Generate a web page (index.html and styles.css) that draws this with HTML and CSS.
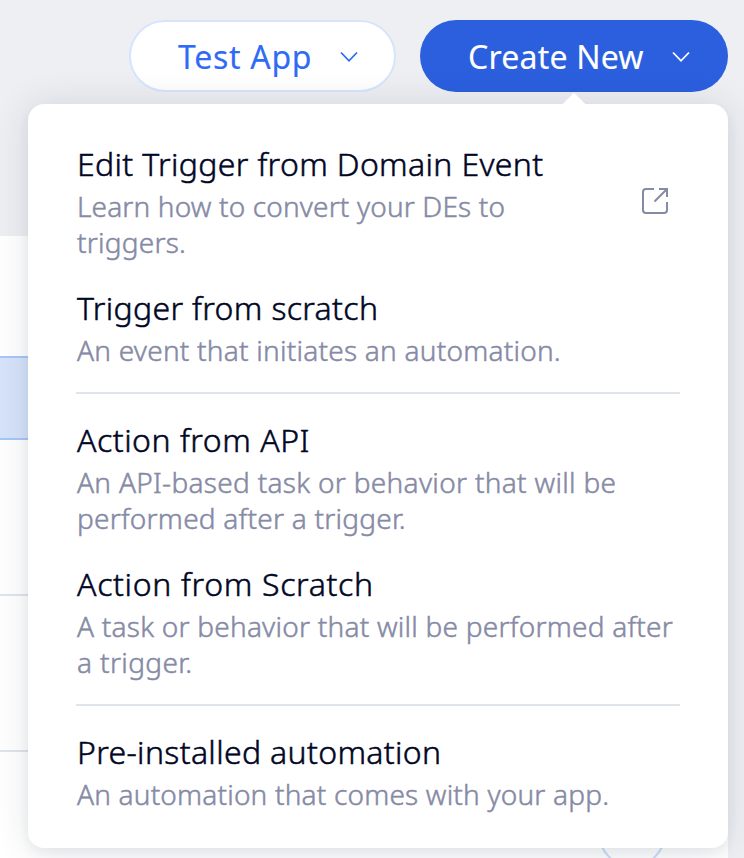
FILE: index.html
```
<!DOCTYPE html>
<html lang="en">
<head>
<meta charset="utf-8">
<title>Automations</title>
<link rel="stylesheet" href="styles.css">
</head>
<body>
<header class="top">
  <button class="btn secondary"><span class="label">Test App</span><svg class="chev" viewBox="0 0 20 12"><path d="M2 1.5 10 9.8 18 1.5"/></svg></button>
  <button class="btn primary"><span class="label">Create New</span><svg class="chev" viewBox="0 0 20 12"><path d="M2 1.5 10 9.8 18 1.5"/></svg></button>
</header>
<main class="table">
  <div class="row head"></div>
  <div class="row selected"></div>
  <div class="row"></div>
  <div class="row"></div>
  <div class="row last"><span class="ring"></span></div>
</main>
<div class="menu">
  <i class="arrow"></i>
  <div class="group">
    <div class="item">
      <div class="text"><h3 class="t-edit">Edit Trigger from Domain Event</h3><p class="t-learn">Learn how to convert your DEs to</p><p>triggers.</p></div>
      <svg class="ext" viewBox="0 0 28 28"><path d="M13 2H5Q2 2 2 5V23Q2 26 5 26H23Q26 26 26 23V15M18 2H26V10M26 2 13.5 14.5"/></svg>
    </div>
    <div class="item">
      <div class="text"><h3>Trigger from scratch</h3><p>An event that initiates an automation.</p></div>
    </div>
  </div>
  <div class="group">
    <div class="item">
      <div class="text"><h3 class="t-api">Action from API</h3><p class="t-task">An API-based task or behavior that will be</p><p>performed after a trigger.</p></div>
    </div>
    <div class="item">
      <div class="text"><h3 class="t-scratch">Action from Scratch</h3><p>A task or behavior that will be performed after</p><p class="t-end">a trigger.</p></div>
    </div>
  </div>
  <div class="group">
    <div class="item">
      <div class="text"><h3>Pre-installed automation</h3><p class="t-comes">An automation that comes with your app.</p></div>
    </div>
  </div>
</div>
</body>
</html>
```
FILE: styles.css
```
* { box-sizing: border-box; }
body { margin: 0; height: 858px; overflow: hidden; background: #eeeff3; font-family: "Noto Sans", sans-serif; position: relative; }

.top { height: 236px; padding: 20px 16px 0 0; display: flex; justify-content: flex-end; align-items: flex-start; gap: 24px; }
.btn { height: 72px; border-radius: 36px; border: 0; padding: 2px 0 0 48px; display: flex; align-items: center; font: 400 32px/48px "Noto Sans", sans-serif; }
.label { width: 132px; white-space: nowrap; text-align: left; letter-spacing: .7px; -webkit-text-stroke: .12px currentColor; }
.secondary { width: 267px; background: #fff; color: #2f6bf6; border: 2px solid #d6e4fe; padding-left: 47px; }
.primary { width: 308px; background: #2b5fde; color: #fff; }
.primary .label { width: 174px; letter-spacing: .21px; }
.chev { width: 20px; height: 12px; margin-left: 29px; fill: none; stroke: currentColor; stroke-width: 1.8; }

.table { width: 728px; height: 622px; background: #fff; }
.row { height: 156px; border-bottom: 2px solid #dfe5eb; }
.head { height: 120px; border: 0; }
.selected { height: 84px; background: #d6e3fb; border: solid #a8c6f7; border-width: 2px 0; }
.last { position: relative; border: 0; height: 106px; overflow: hidden; }
.ring { position: absolute; left: 598px; top: 47px; width: 68px; height: 68px; border: 2px solid #c9dcfb; border-radius: 50%; }

.menu { position: absolute; left: 28px; top: 104px; width: 700px; height: 744px; padding: 36px 48px; background: #fff; border-radius: 16px; box-shadow: 0 0 36px rgba(22, 45, 61, .12), 0 6px 12px rgba(22, 45, 61, .06); }
.arrow { position: absolute; left: 538px; top: -8px; width: 16px; height: 16px; background: #fff; transform: rotate(45deg); }
.group + .group { margin-top: 24px; border-top: 2px solid #dfe5eb; padding-top: 22px; }
.item { display: flex; justify-content: space-between; }
.item + .item { margin-top: 24px; }
.text { padding-left: 1px; }
h3, p { margin: 0; white-space: nowrap; font-weight: 300; -webkit-text-stroke: .5px currentColor; }
h3 { font-size: 32px; line-height: 48px; color: #000624; letter-spacing: .335px; }
p { font-size: 28px; line-height: 36px; color: #868aa5; letter-spacing: .235px; }
.ext { width: 28px; height: 28px; margin: 47px 11px 0 0; fill: none; stroke: #868aa5; stroke-width: 2; }

/* optical tracking */
.t-edit { letter-spacing: .345px; }
.t-learn { letter-spacing: .154px; }
.t-api { letter-spacing: .52px; }
.t-task { letter-spacing: .308px; }
.t-scratch { letter-spacing: .67px; }
.t-end { letter-spacing: .36px; }
.t-comes { letter-spacing: .191px; }
```
